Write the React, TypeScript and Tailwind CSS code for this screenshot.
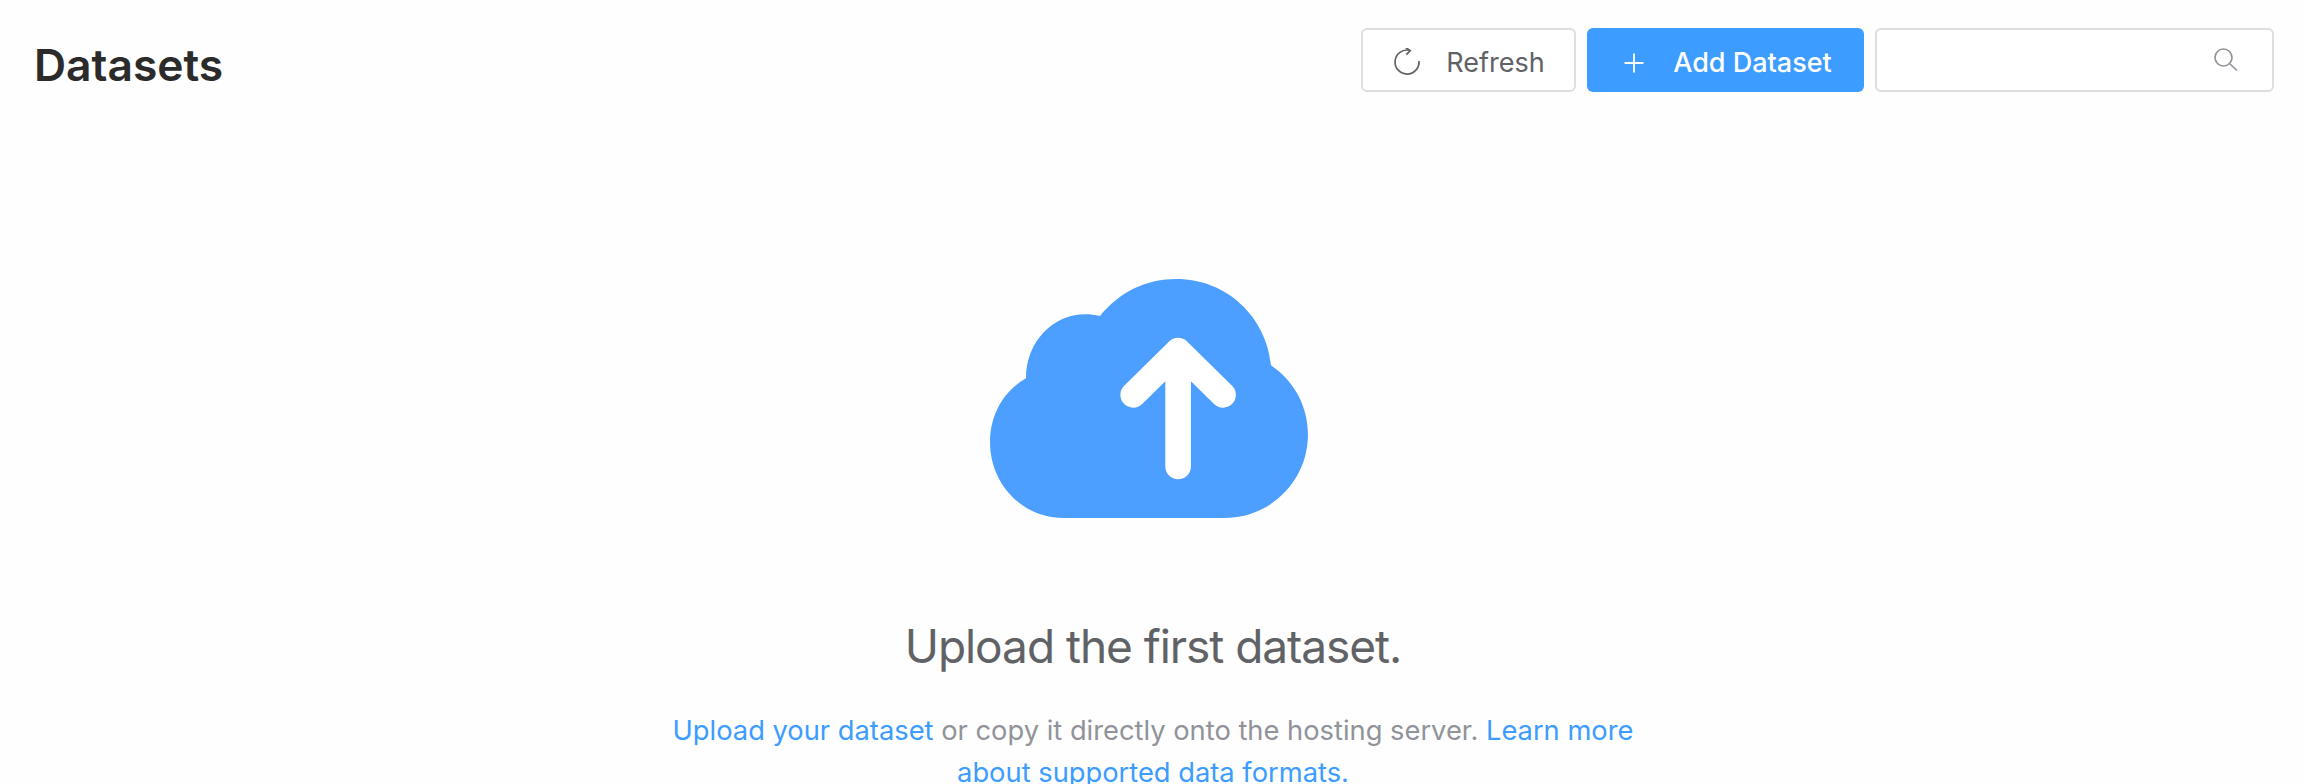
import { Plus } from "lucide-react";

const CloudUpload = () => (
  <svg viewBox="90 57 955 718" className="mr-[6px] w-[318px] h-[239px]">
    <path
      fill="#4d9fff"
      d="M420 168C480 95 560 57 650 57C800 57 920 170 934 316C1005 365 1045 440 1045 525C1045 665 930 775 795 775L310 775C185 775 90 670 90 548C90 465 130 395 198 355C198 245 280 163 375 163C392 163 405 165 420 168Z"
    />
    <path
      fill="none"
      stroke="#fff"
      strokeWidth="77"
      strokeLinecap="round"
      strokeLinejoin="round"
      d="M655 620L655 280M520 405L655 272L790 405"
    />
  </svg>
);

const RefreshIcon = () => (
  <svg viewBox="0 3 30 30" fill="none" stroke="#606266" strokeWidth="1.7" className="w-[30px] h-[30px]">
    <path d="M27 16A12 12 0 1 1 17 5.2" />
    <path d="M13.3 2.3L18.3 5.7L14.3 9.7" />
  </svg>
);

const SearchIcon = () => (
  <svg viewBox="0 0 28 28" fill="none" stroke="#909399" strokeWidth="1.7" className="w-[28px] h-[28px]">
    <circle cx="11.5" cy="11.5" r="8.5" />
    <path d="M18 18L25 24.5" />
  </svg>
);

const App = () => {
  return (
    <main className="h-[784px] overflow-hidden bg-[#fefefe] font-['Inter',sans-serif]">
      <header className="flex items-center justify-between pl-[34px] pr-[30px] pt-[28px]">
        <h1 className="pt-[10px] text-[44.4px] leading-[54px] font-semibold text-[#2b2b2b]">Datasets</h1>
        <div className="flex gap-[11px]">
          <button className="flex h-[64px] w-[215px] items-center justify-center gap-[24px] rounded-[6px] border-2 border-[#dedede] bg-white pt-[6px] text-[27px] text-[#606266]">
            <RefreshIcon />
            Refresh
          </button>
          <button className="flex h-[64px] w-[277px] items-center justify-center gap-[24px] rounded-[6px] bg-[#3c9cff] pt-[6px] text-[27px] font-medium text-white">
            <Plus size={30} strokeWidth={1.5} />
            Add Dataset
          </button>
          <div className="flex h-[64px] w-[399px] items-center justify-end rounded-[6px] border-2 border-[#dedede] bg-white pr-[32px]">
            <SearchIcon />
          </div>
        </div>
      </header>

      <section className="mt-[187px] flex flex-col items-center">
        <CloudUpload />
        <h2 className="mt-[98px] ml-[2px] text-[46px] leading-[60px] tracking-[-1.05px] text-[#606266]">Upload the first dataset.</h2>
        <p className="mt-[34px] ml-[2px] w-[980px] text-center text-[27.3px] leading-[42px] text-[#909399]">
          <a className="text-[#3c9cff]">Upload your dataset</a> or copy it directly onto the hosting server.{" "}
          <a className="text-[#3c9cff]">Learn more about supported data formats.</a>
        </p>
      </section>
    </main>
  );
};

export default App;
